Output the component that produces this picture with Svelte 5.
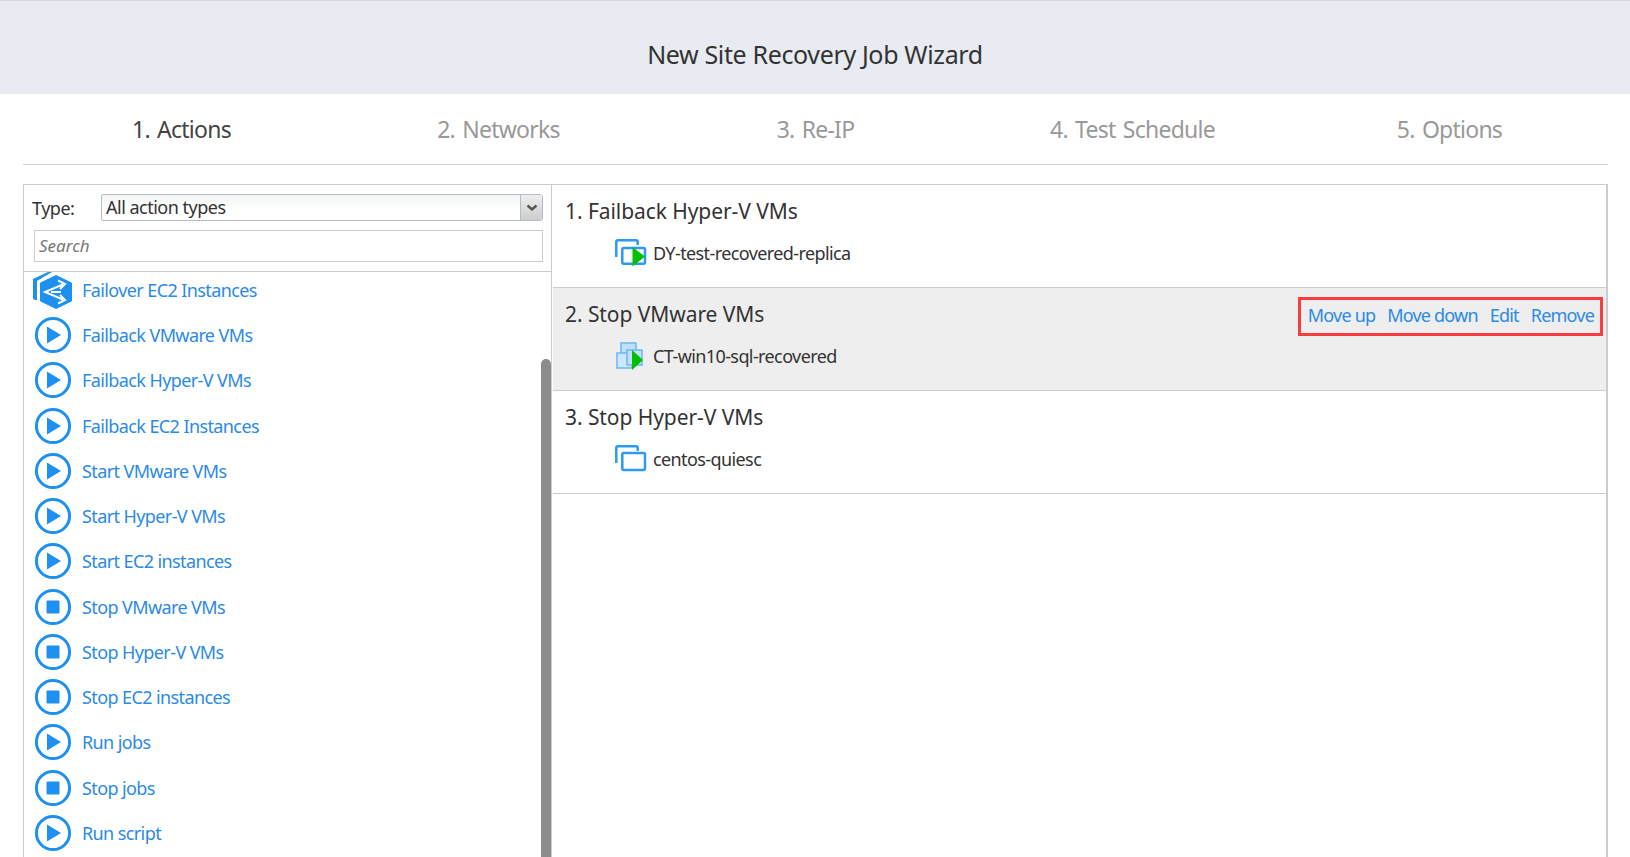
<script>
  const play = 'play', stop = 'stop';
  const actions = [
    ['Failback VMware VMs', play], ['Failback Hyper-V VMs', play], ['Failback EC2 Instances', play],
    ['Start VMware VMs', play], ['Start Hyper-V VMs', play], ['Start EC2 instances', play],
    ['Stop VMware VMs', stop], ['Stop Hyper-V VMs', stop], ['Stop EC2 instances', stop],
    ['Run jobs', play], ['Stop jobs', stop], ['Run script', play]
  ];
  const tabs = ['1. Actions', '2. Networks', '3. Re-IP', '4. Test Schedule', '5. Options'];
</script>

<div class="page">
  <header class="title">New Site Recovery Job Wizard</header>
  <nav class="tabs">
    {#each tabs as t, i}
      <div class="tab" class:active={i === 0}>{t}</div>
    {/each}
  </nav>
  <main class="panel">
    <aside class="left">
      <div class="filters">
        <div class="type-row">
          <span class="type-label">Type:</span>
          <div class="select">
            <span class="select-text">All action types</span>
            <span class="select-btn">
              <svg width="12" height="8" viewBox="0 0 12 8"><path d="M1.5 1.5 L6 5.500 L10.500 1.500" fill="none" stroke="#555" stroke-width="2.400"/></svg>
            </span>
          </div>
        </div>
        <div class="search">Search</div>
      </div>
      <div class="list">
        <div class="scrollbar"></div>
        <div class="item first">
          <svg class="ico ec2" width="40" height="38" viewBox="0 0 40 38">
            <path d="M0 7 L15 0 L19 0 L4 9 L4 28 Q0 28 0 26 Z" fill="#1e90f0"/>
            <path d="M23 3.500 L38.500 11 L38.500 29 L23 36.500 L7.500 29 L7.500 11 Z" fill="#1e90f0" stroke="#1e90f0" stroke-linejoin="round"/>
            <path d="M31 12 L12 20 L31 28 M25 8.500 L32 12 L27 17 M18 20 L28 20 M27 23 L32 28 L25 31.500" fill="none" stroke="#fff" stroke-width="2"/>
          </svg>
          <span class="link">Failover EC2 Instances</span>
        </div>
        {#each actions as [name, kind]}
          <div class="item">
            <svg class="ico" width="38" height="38" viewBox="0 0 38 38">
              <circle cx="19" cy="19" r="16.600" fill="#fff" stroke="#1e90f0" stroke-width="3"/>
              {#if kind === 'play'}
                <path d="M13 10.500 L27 19 L13 27.500 Z" fill="#1e90f0"/>
              {:else}
                <rect x="12.500" y="12.500" width="13" height="13" rx="1" fill="#1e90f0"/>
              {/if}
            </svg>
            <span class="link">{name}</span>
          </div>
        {/each}
      </div>
    </aside>
    <section class="right">
      <div class="job">
        <h2>1. Failback Hyper-V VMs</h2>
        <div class="vm">
          <svg width="32" height="28" viewBox="0 0 32 28">
            <path d="M1.300 18 V3 Q1.300 1.300 3 1.300 H21 Q22.700 1.300 22.700 3 V6" fill="none" stroke="#2a9af5" stroke-width="2.500"/>
            <rect x="7.300" y="9" width="22.700" height="15.700" rx="1.500" fill="#fff" stroke="#2a9af5" stroke-width="2.500"/>
            <path d="M17.500 8 L30 17.500 L17.500 27.500 Z" fill="#00c000"/>
          </svg>
          <span>DY-test-recovered-replica</span>
        </div>
      </div>
      <div class="job hover">
        <h2>2. Stop VMware VMs</h2>
        <div class="actions-box">
          <span>Move up</span><span>Move down</span><span>Edit</span><span>Remove</span>
        </div>
        <div class="vm">
          <svg width="32" height="28" viewBox="0 0 32 28">
            <rect x="6" y="1" width="15" height="17" fill="#bfe0fb" stroke="#6bb6f5" stroke-width="1.500"/>
            <rect x="2" y="11" width="15" height="15" fill="#cde8fd" stroke="#6bb6f5" stroke-width="1.500"/>
            <rect x="12" y="8" width="15" height="15" fill="#bfe0fb" stroke="#6bb6f5" stroke-width="1.500"/>
            <path d="M17 8 L28 18 L17 28 Z" fill="#00c000"/>
          </svg>
          <span>CT-win10-sql-recovered</span>
        </div>
      </div>
      <div class="job">
        <h2>3. Stop Hyper-V VMs</h2>
        <div class="vm">
          <svg width="32" height="28" viewBox="0 0 32 28">
            <path d="M1.300 18 V3 Q1.300 1.300 3 1.300 H21 Q22.700 1.300 22.700 3 V6" fill="none" stroke="#2a9af5" stroke-width="2.500"/>
            <rect x="7.300" y="8" width="22.700" height="17" rx="1.500" fill="#fff" stroke="#2a9af5" stroke-width="2.500"/>
          </svg>
          <span>centos-quiesc</span>
        </div>
      </div>
    </section>
  </main>
</div>

<style>
  :global(html), :global(body) { margin: 0; height: 100%; overflow: hidden; background: #fff; }
  .page {
    width: 1630px; height: 857px; overflow: hidden; background: #fff; color: #333;
    font-family: "Noto Sans", "DejaVu Sans", sans-serif;
  }
  .title {
    height: 94px; box-sizing: border-box; background: #e8ebf2; border-top: 1px solid #d4d7de;
    display: flex; justify-content: center; align-items: center; padding-top: 12px;
    font-size: 25px; letter-spacing: -0.36px; color: #333;
  }
  .tabs {
    margin: 0 22px 0 23px; height: 71px; box-sizing: border-box; border-bottom: 1px solid #ccc;
    display: grid; grid-template-columns: repeat(5, 1fr); align-items: center;
  }
  .tab { text-align: center; font-size: 23px; letter-spacing: -0.75px; word-spacing: 2px; color: #999; padding-bottom: 1px; }
  .tab.active { color: #444; }
  .panel {
    margin: 19px 22px 0 23px; height: 700px; box-sizing: border-box;
    border: 1px solid #ccc; border-right-width: 2px; border-bottom: 0; display: flex;
  }
  .left { width: 527px; flex: none; border-right: 1px solid #ccc; display: flex; flex-direction: column; }
  .filters { height: 87px; box-sizing: border-box; border-bottom: 1px solid #ccc; padding: 9px 8px 0 8px; }
  .type-row { display: flex; align-items: center; gap: 23px; height: 27px; }
  .type-label { font-size: 18px; letter-spacing: -0.5px; width: 45px; flex: none; margin-right: 1px; }
  .select {
    flex: 1; height: 27px; box-sizing: border-box; border: 1px solid #b4bbcf; border-radius: 2px 3px 3px 2px;
    display: flex; align-items: center; justify-content: space-between;
    background: linear-gradient(#f2f4f3, #fff 60%);
  }
  .select-text { font-size: 18px; letter-spacing: -0.5px; padding: 0 0 2px 4px; }
  .select-btn {
    width: 21px; height: 25px; border-left: 1px solid #b4bbcf;
    background: linear-gradient(#eee, #ccc); display: flex; align-items: center; justify-content: center;
  }
  .search {
    margin: 9px 0 0 2px; height: 32px; box-sizing: border-box; border: 1px solid #ccc;
    font-size: 17px; font-style: italic; color: #777; padding: 3px 4px; letter-spacing: 0;
  }
  .list { position: relative; flex: 1; overflow: hidden; padding: 0 0 0 10px; }
  .scrollbar {
    position: absolute; right: 0; top: 87px; width: 10px; height: 700px;
    background: #8c8c8c; border-radius: 5px 5px 0 0;
  }
  .item { height: 45.25px; display: flex; align-items: center; gap: 10px; }
  .item.first { height: 40.6px; margin-left: -1px; gap: 9px; }
  .first .link { padding-bottom: 4px; }
  .ico { flex: none; }
  .ec2 { align-self: flex-start; }
  .link { font-size: 18px; letter-spacing: -0.6px; color: #2b8ae6; white-space: nowrap; }
  .right { flex: 1; display: flex; flex-direction: column; padding-left: 1px; }
  .job {
    height: 103px; box-sizing: border-box; border-bottom: 1px solid #ccc; padding: 12px 0 0 12px;
    position: relative;
  }
  .job.hover { background: #eee; }
  h2 { margin: 0; font-weight: 400; font-size: 21px; line-height: 29px; letter-spacing: -0.07px; color: #333; }
  .vm { display: flex; align-items: center; gap: 6px; margin: 13px 0 0 50px; height: 28px; font-size: 18px; letter-spacing: -0.6px; color: #333; }
  .actions-box {
    position: absolute; right: 3px; top: 9px; width: 305px; height: 39px; box-sizing: border-box;
    border: 3px solid #f83c40; display: flex; justify-content: flex-end; align-items: center; gap: 12px;
    padding: 0 6px 4px 0; font-size: 18px; letter-spacing: -0.8px; color: #2b8ae6; white-space: nowrap;
  }
</style>
